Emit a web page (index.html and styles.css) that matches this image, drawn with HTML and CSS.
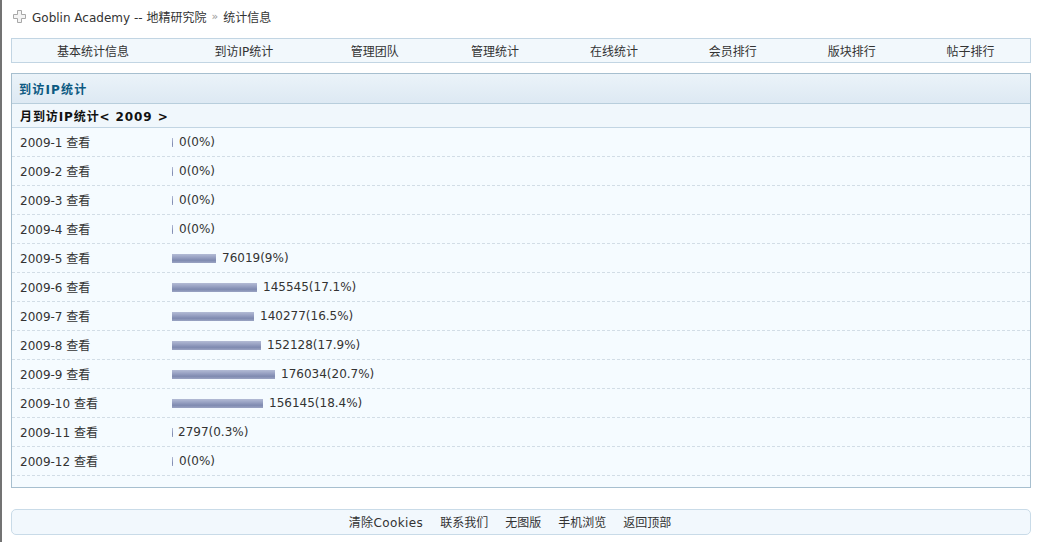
FILE: index.html
```html
<!DOCTYPE html>
<html lang="zh-CN">
<head>
<meta charset="utf-8">
<title>统计信息 - Goblin Academy</title>
<link rel="stylesheet" href="styles.css">
</head>
<body>
<div class="page">
  <div class="crumb">
    <svg class="crumb-icon" width="13" height="13" viewBox="0 0 13 13"><path d="M4.5 0.5h4v4h4v4h-4v4h-4v-4h-4v-4h4z" fill="#f4f4f4" stroke="#a8a8a8"/></svg>
    <span>Goblin Academy -- 地精研究院</span>
    <span class="sep">»</span>
    <span>统计信息</span>
  </div>

  <nav class="tabs">
    <a>基本统计信息</a>
    <a>到访IP统计</a>
    <a>管理团队</a>
    <a>管理统计</a>
    <a>在线统计</a>
    <a>会员排行</a>
    <a>版块排行</a>
    <a>帖子排行</a>
  </nav>

  <section class="box">
    <h2 class="box-title">到访IP统计</h2>
    <div class="box-sub">月到访IP统计&lt; 2009 &gt;</div>
    <div class="rows">
      <div class="row"><span class="month">2009-1 查看</span><span class="bar" style="width:1px"></span><span>0(0%)</span></div>
      <div class="row"><span class="month">2009-2 查看</span><span class="bar" style="width:1px"></span><span>0(0%)</span></div>
      <div class="row"><span class="month">2009-3 查看</span><span class="bar" style="width:1px"></span><span>0(0%)</span></div>
      <div class="row"><span class="month">2009-4 查看</span><span class="bar" style="width:1px"></span><span>0(0%)</span></div>
      <div class="row"><span class="month">2009-5 查看</span><span class="bar" style="width:44px"></span><span>76019(9%)</span></div>
      <div class="row"><span class="month">2009-6 查看</span><span class="bar" style="width:85px"></span><span>145545(17.1%)</span></div>
      <div class="row"><span class="month">2009-7 查看</span><span class="bar" style="width:82px"></span><span>140277(16.5%)</span></div>
      <div class="row"><span class="month">2009-8 查看</span><span class="bar" style="width:89px"></span><span>152128(17.9%)</span></div>
      <div class="row"><span class="month">2009-9 查看</span><span class="bar" style="width:103px"></span><span>176034(20.7%)</span></div>
      <div class="row"><span class="month">2009-10 查看</span><span class="bar" style="width:91px"></span><span>156145(18.4%)</span></div>
      <div class="row"><span class="month">2009-11 查看</span><span class="bar thin" style="width:1px"></span><span>2797(0.3%)</span></div>
      <div class="row"><span class="month">2009-12 查看</span><span class="bar" style="width:1px"></span><span>0(0%)</span></div>
    </div>
  </section>

  <footer class="foot">
    <a>清除Cookies</a>
    <a>联系我们</a>
    <a>无图版</a>
    <a>手机浏览</a>
    <a>返回顶部</a>
  </footer>
</div>
</body>
</html>
```

FILE: styles.css
```css
html {
  border-left: 2px solid #737373;
  height: 100%;
  box-sizing: border-box;
}
body {
  margin: 0;
  background: #fff;
  font-family: "DejaVu Sans", "Noto Sans CJK SC", sans-serif;
  font-size: 12px;
  color: #333;
}
.page {
  padding: 0 8px 0 9px;
}
.crumb {
  height: 33px;
  display: flex;
  align-items: center;
  padding-left: 2px;
  color: #333;
}
.crumb-icon {
  margin-right: 6px;
  margin-top: -1px;
}
.crumb .sep {
  color: #999;
  margin: 0 5px;
  font-size: 11px;
}
.tabs {
  display: grid;
  grid-template-columns: 162fr 140fr 122fr 119fr 119fr 119fr 119fr 119fr;
  height: 23px;
  margin-top: 5px;
  border: 1px solid #c2d5e3;
  background: #f2f8fc;
}
.tabs a {
  display: flex;
  align-items: center;
  justify-content: center;
  color: #333;
}
.box {
  margin-top: 10px;
  border: 1px solid #a7bfcf;
  background: #f5fbff;
  padding-bottom: 11px;
}
.box-title {
  margin: 0;
  height: 29px;
  line-height: 32px;
  padding-left: 7px;
  font-size: 12px;
  font-weight: bold;
  color: #0d5a82;
  letter-spacing: 1.2px;
  background: linear-gradient(#ebf3f9, #dde9f3);
  border-bottom: 1px solid #b8cedc;
}
.box-sub {
  height: 23px;
  line-height: 27px;
  padding-left: 8px;
  font-weight: bold;
  color: #111;
  background: #f0f7fc;
  border-bottom: 1px solid #c2d5e3;
  letter-spacing: 0.9px;
}
.row {
  box-sizing: border-box;
  height: 29px;
  padding-bottom: 1px;
  display: flex;
  align-items: center;
  padding-left: 8px;
  border-bottom: 1px dashed #d2dde6;
}
.month {
  width: 152px;
  flex: none;
}
.bar {
  display: inline-block;
  height: 9px;
  margin-right: 6px;
  margin-top: 1px;
  flex: none;
  background: linear-gradient(#b3bbd5, #9aa3c4 35%, #7f8ab0 70%, #9ba4c3);
}
.bar.thin {
  margin-right: 5px;
}
.foot {
  margin-top: 21px;
  box-sizing: border-box;
  height: 26px;
  padding-bottom: 2px;
  border: 1px solid #c9dbe8;
  border-radius: 5px;
  background: #f2f8fd;
  display: flex;
  align-items: center;
  justify-content: center;
  gap: 17px;
  padding-right: 22px;
}
.foot a {
  color: #333;
}
.foot a:first-child {
  letter-spacing: 0.4px;
}
```
